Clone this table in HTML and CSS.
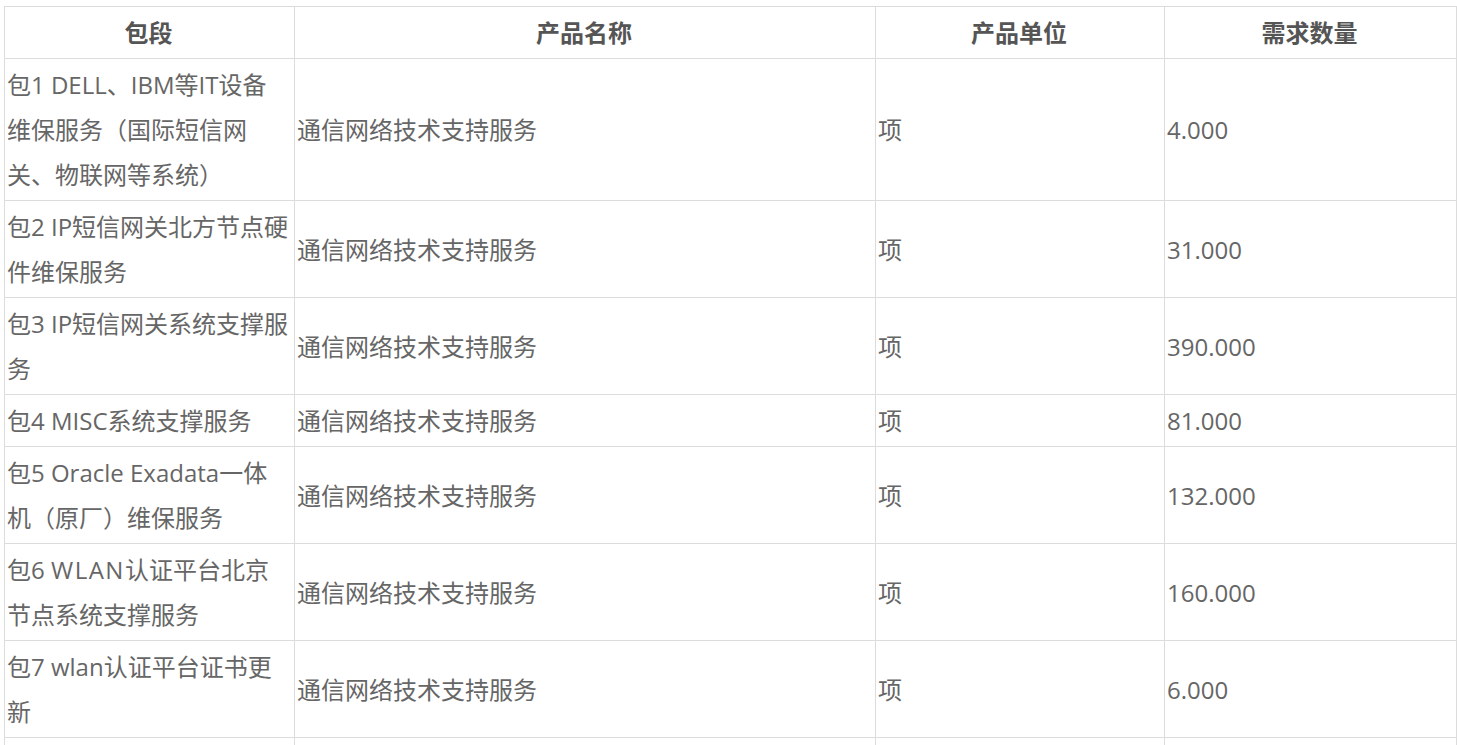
FILE: index.html
```html
<!DOCTYPE html>
<html lang="zh">
<head>
<meta charset="utf-8">
<link rel="stylesheet" href="styles.css">
</head>
<body>
<table class="grid">
  <colgroup>
    <col class="c1"><col class="c2"><col class="c3"><col class="c4">
  </colgroup>
  <thead>
    <tr><th>包段</th><th>产品名称</th><th>产品单位</th><th>需求数量</th></tr>
  </thead>
  <tbody>
    <tr><td>包1 DELL、IBM等IT设备维保服务（国际短信网关、物联网等系统）</td><td>通信网络技术支持服务</td><td>项</td><td>4.000</td></tr>
    <tr><td>包2 IP短信网关北方节点硬件维保服务</td><td>通信网络技术支持服务</td><td>项</td><td>31.000</td></tr>
    <tr><td>包3 IP短信网关系统支撑服务</td><td>通信网络技术支持服务</td><td>项</td><td>390.000</td></tr>
    <tr><td>包4 MISC系统支撑服务</td><td>通信网络技术支持服务</td><td>项</td><td>81.000</td></tr>
    <tr><td>包5 Oracle Exadata一体机（原厂）维保服务</td><td>通信网络技术支持服务</td><td>项</td><td>132.000</td></tr>
    <tr><td>包6 <span class="wide">WLAN</span>认证平台北京节点系统支撑服务</td><td>通信网络技术支持服务</td><td>项</td><td>160.000</td></tr>
    <tr><td>包7 wlan认证平台证书更新</td><td>通信网络技术支持服务</td><td>项</td><td>6.000</td></tr>
    <tr class="cut"><td>&nbsp;</td><td>&nbsp;</td><td>&nbsp;</td><td>&nbsp;</td></tr>
  </tbody>
</table>
</body>
</html>
```
FILE: styles.css
```css
html, body {
  margin: 0;
  padding: 0;
  background: #fff;
  overflow: hidden;
}
body {
  padding: 6px 0 0 4px;
  font-family: "Open Sans", "Noto Sans CJK SC", sans-serif;
  color: #666;
}
.grid {
  border-collapse: collapse;
  width: 1452px;
  table-layout: fixed;
  font-size: 24px;
}
.c1 { width: 290px; }
.c2 { width: 581px; }
.c3 { width: 289px; }
.c4 { width: 292px; }
.grid th, .grid td {
  border: 1px solid #dcdcdc;
  padding: 3px 4px 3px 2px;
  line-height: 45px;
  vertical-align: middle;
  text-align: left;
  word-break: break-all;
}
.grid th {
  text-align: center;
  font-weight: bold;
  color: #555;
}
.wide {
  letter-spacing: 1.5px;
}
.grid .cut td {
  height: 90px;
}
```
